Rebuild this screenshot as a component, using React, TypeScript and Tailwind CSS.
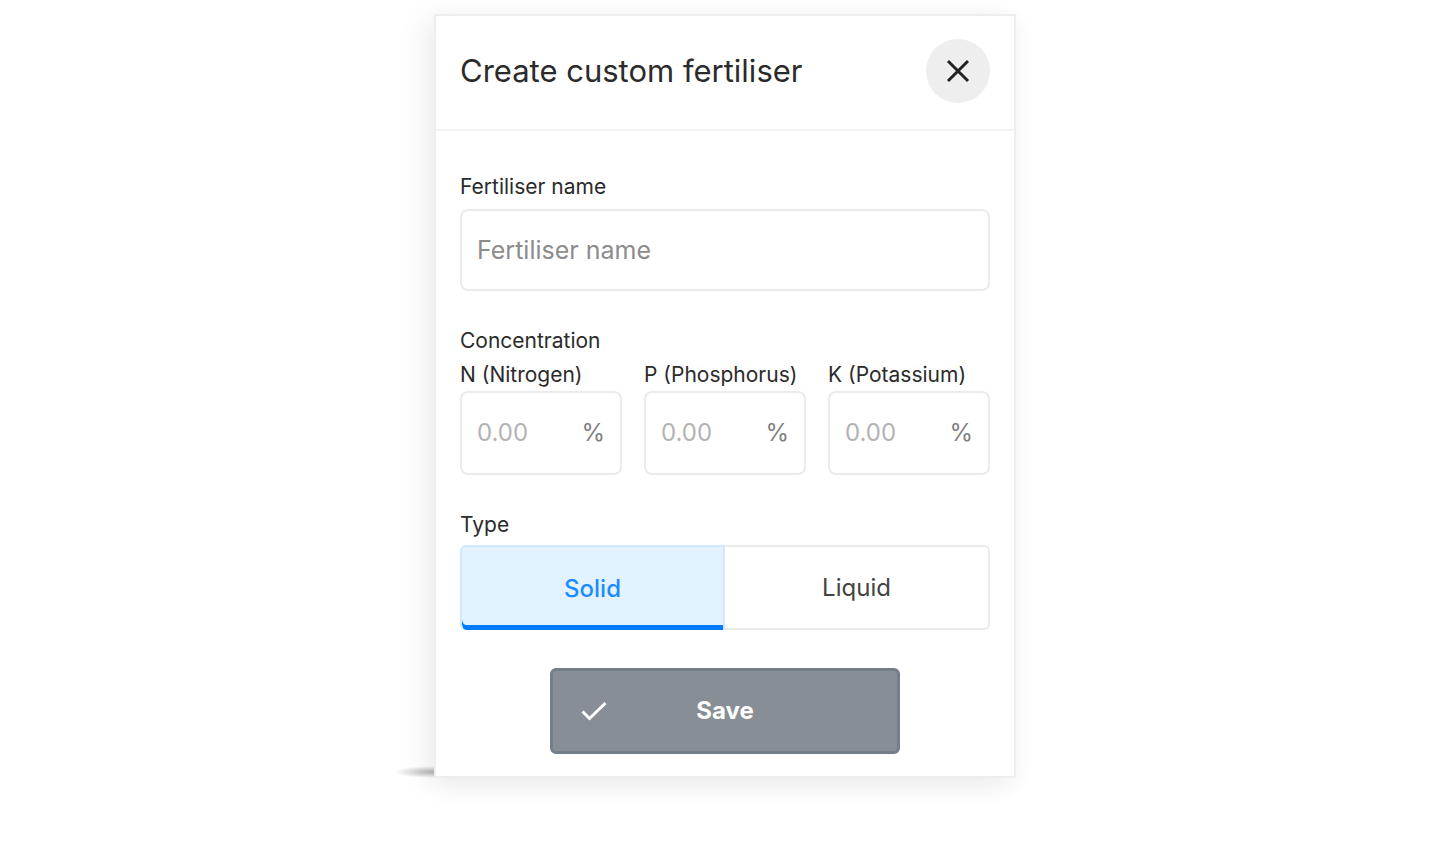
import { useState } from "react";

const nutrients = [
  { id: "nitrogen", label: "N (Nitrogen)" },
  { id: "phosphorus", label: "P (Phosphorus)" },
  { id: "potassium", label: "K (Potassium)" },
];

export default function App() {
  const [type, setType] = useState("Solid");

  return (
    <main className="flex min-h-screen items-start justify-center bg-white pt-[14px] pl-[10px] font-['Inter',sans-serif] text-[#2b2b2b]">
      <div className="relative w-full max-w-[582px]">
        {/* dark sliver of shadow at the foot of the dialog */}
        <div className="absolute bottom-0 -left-10 h-3 w-20 bg-[radial-gradient(closest-side,rgba(0,0,0,0.3),transparent)]" />
        <section
          role="dialog"
          aria-labelledby="dialog-title"
          className="relative border-2 border-[#eee] bg-white shadow-[-10px_4px_30px_rgba(0,0,0,0.06),0_8px_24px_rgba(0,0,0,0.04)]"
        >
          <header className="flex h-[115px] items-center justify-between border-b-2 border-[#f2f2f2] px-6 pb-1">
            <h1 id="dialog-title" className="text-[31px] leading-10">
              Create custom fertiliser
            </h1>
            <button
              type="button"
              aria-label="Close"
              className="flex size-16 items-center justify-center rounded-full bg-[#eee]"
            >
              <svg
                className="size-6"
                viewBox="0 0 24 24"
                fill="none"
                stroke="#222"
                strokeWidth={3}
              >
                <path d="M2 2l20 20M22 2l-20 20" />
              </svg>
            </button>
          </header>

          <form
            className="px-6 pt-11 pb-[22px]"
            onSubmit={(e) => e.preventDefault()}
          >
            <label htmlFor="name" className="block text-[21px] leading-6">
              Fertiliser name
            </label>
            <input
              id="name"
              type="text"
              placeholder="Fertiliser name"
              className="mt-[10px] block h-[82px] w-full rounded-lg border-2 border-[#ebebeb] px-[15px] text-[25px] outline-none placeholder:text-[#8c8c8c]"
            />

            <fieldset className="mt-[38px]">
              <legend className="text-[21px] leading-6">Concentration</legend>
              <div className="grid grid-cols-3 gap-[22px] pt-[10px]">
                {nutrients.map((nutrient) => (
                  <div key={nutrient.id}>
                    <label
                      htmlFor={nutrient.id}
                      className="block text-[21px] leading-6 whitespace-nowrap"
                    >
                      {nutrient.label}
                    </label>
                    <div className="mt-1 flex h-[84px] items-center rounded-lg border-2 border-[#ebebeb] px-[15px]">
                      <input
                        id={nutrient.id}
                        type="text"
                        inputMode="decimal"
                        placeholder="0.00"
                        className="w-full min-w-0 text-[24px] outline-none placeholder:text-[#b3b3b3]"
                      />
                      <span className="text-[24px] text-[#808080]">%</span>
                    </div>
                  </div>
                ))}
              </div>
            </fieldset>

            <fieldset className="mt-[38px]">
              <legend className="text-[21px] leading-6">Type</legend>
              <div className="pt-2">
                <div className="grid h-[85px] grid-cols-2">
                  <button
                    type="button"
                    aria-pressed={type === "Solid"}
                    onClick={() => setType("Solid")}
                    className={
                      type === "Solid"
                        ? "rounded-l-md border-2 border-b-0 border-[#cfe8ff] bg-[#e3f2ff] text-[24px] font-medium text-[#1a8cff] shadow-[inset_0_-5px_0_#007aff]"
                        : "rounded-l-md border-2 border-r-0 border-[#ebebeb] text-[24px] text-[#444]"
                    }
                  >
                    Solid
                  </button>
                  <button
                    type="button"
                    aria-pressed={type === "Liquid"}
                    onClick={() => setType("Liquid")}
                    className={
                      type === "Liquid"
                        ? "rounded-r-md border-2 border-b-0 border-[#cfe8ff] bg-[#e3f2ff] text-[24px] font-medium text-[#1a8cff] shadow-[inset_0_-5px_0_#007aff]"
                        : "rounded-r-md border-2 border-l-0 border-[#ebebeb] text-[24px] text-[#444]"
                    }
                  >
                    Liquid
                  </button>
                </div>
              </div>
            </fieldset>

            <button
              type="submit"
              className="mx-auto mt-[38px] grid h-[86px] w-full max-w-[350px] grid-cols-[1fr_auto_1fr] items-center rounded-md border-3 border-[#737e89] bg-[#878e96] px-7 text-[24px] font-bold text-white"
            >
              <svg
                className="h-5 w-[26px]"
                viewBox="0 0 26 20"
                fill="none"
                stroke="currentColor"
                strokeWidth={3}
              >
                <path d="M1.5 10.5l7 7L24.5 2" />
              </svg>
              Save
            </button>
          </form>
        </section>
      </div>
    </main>
  );
}
